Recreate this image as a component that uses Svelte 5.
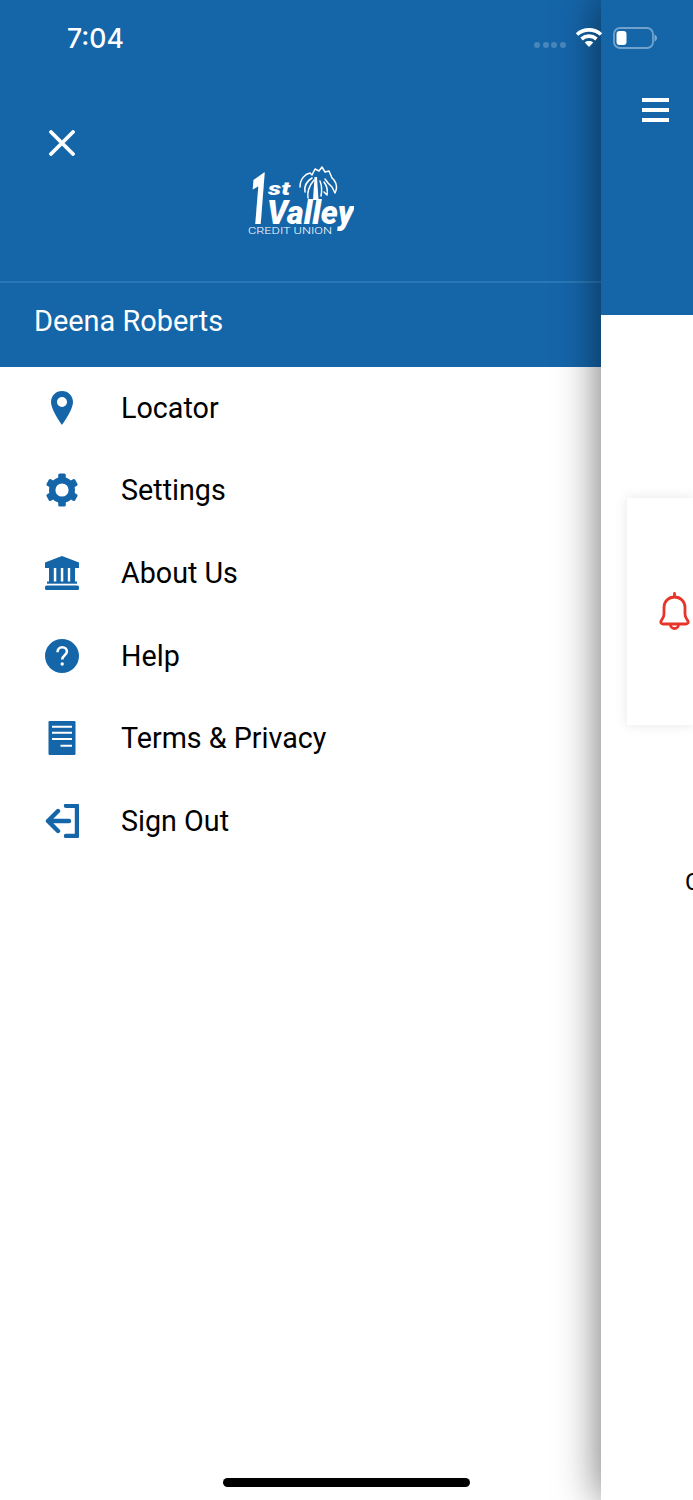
<script>
const menu = ["Locator", "Settings", "About Us", "Help", "Terms & Privacy", "Sign Out"];
const teeth = [0, 60, 120, 180, 240, 300];
</script>

<div class="page">
	<aside class="drawer">
		<header class="drawer-head">
			<div class="brand">
				<svg class="close" viewBox="0 0 26 26" width="26" height="26" aria-label="Close">
					<path d="M2 2L24 24M24 2L2 24" fill="none" stroke="#fff" stroke-width="3.800" stroke-linecap="round"/>
				</svg>
				<svg class="logo" viewBox="0 0 106 68" width="106" height="68" aria-label="1st Valley Credit Union">
					<g fill="none" stroke="#fff" stroke-linecap="round" stroke-linejoin="round">
						<path stroke-width="1.500" d="M52 21C52 13 57 8 62 7L64 9L67 3L71 5L74 1L77 6L81 5L84 12L86 14C89 18 89 23 87 27L84 21L80 17L77 13"/>
						<path stroke-width="1.500" d="M57 26C56 20 59 15 64 12M60 32C59 26 61 20 66 14M76 16C79 20 80 24 79 29L76 26M72 15C74 20 74 25 73 30"/>
					</g>
					<path fill="#fff" d="M66.500 11L69 11L70.500 34L65 34Z"/>
					<text class="l-one" x="1" y="58" textLength="19" lengthAdjust="spacingAndGlyphs">1</text>
					<text class="l-st" x="20" y="29" textLength="22" lengthAdjust="spacingAndGlyphs">st</text>
					<text class="l-valley" x="19" y="58" textLength="87" lengthAdjust="spacingAndGlyphs">Valley</text>
					<text class="l-credit" x="0" y="67.500" textLength="84" lengthAdjust="spacingAndGlyphs">CREDIT UNION</text>
				</svg>
			</div>
			<div class="user">Deena Roberts</div>
		</header>

		<nav class="menu">
			{#each menu as label, i}
				<div class="item">
					<svg viewBox="0 0 34 34" width="34" height="34" class="icon">
						{#if i == 0}
							<path fill-rule="evenodd" d="M17 0C10.900 0 6 4.900 6 11c0 8 11 23 11 23s11-15 11-23C28 4.900 23.100 0 17 0zM17 6a5 5 0 1 1 0 10a5 5 0 0 1 0-10z"/>
						{:else if i == 1}
							<circle cx="17" cy="17" r="9.800" fill="none" stroke="#1565a9" stroke-width="6.400"/>
							{#each teeth as deg}
								<rect x="13.200" y="0.500" width="7.600" height="7" rx="1.600" transform="rotate({deg} 17 17)"/>
							{/each}
						{:else if i == 2}
							<path d="M17 0L34 6.500V12H0V6.500Z"/>
							<path d="M4 12h4.800v14H4zM11.300 12h4.500v14h-4.500zM18.300 12h4.500v14h-4.500zM25.200 12H30v14h-4.800z"/>
							<rect x="2" y="25.500" width="30" height="2.200"/>
							<rect x="0" y="29.600" width="34" height="4.400" rx="1.500"/>
						{:else if i == 3}
							<circle cx="17" cy="17" r="17"/>
							<path d="M12.500 13.200c0-3 2-4.900 4.700-4.900c2.800 0 4.700 1.800 4.700 4.300c0 3.700-4.700 3.800-4.700 8" fill="none" stroke="#fff" stroke-width="2.500"/>
							<circle cx="17.200" cy="25" r="1.700" fill="#fff"/>
						{:else if i == 4}
							<rect x="3.500" y="0" width="27" height="34" rx="1.200"/>
							<path d="M7 5.700h20M7 11.700h20M7 18h20M15.500 24.700H27" stroke="#fff" stroke-width="2.100" fill="none"/>
						{:else}
							<path d="M21 1.800H32V32H21M3 17H24M13 7L3 17L13 27" fill="none" stroke="#1565a9" stroke-width="4.400" stroke-linecap="round" stroke-linejoin="round"/>
						{/if}
					</svg>
					<span>{label}</span>
				</div>
			{/each}
		</nav>
	</aside>

	<main class="content">
		<div class="content-head">
			<div class="burger"><i></i><i></i><i></i></div>
		</div>
		<div class="card">
			<svg viewBox="0 0 32 40" width="32" height="40" fill="none" stroke="#e8352a" stroke-width="2.800" stroke-linecap="round" stroke-linejoin="round">
				<path d="M15.500 1.500V5M15.500 5C9.500 5 5 9.500 5 15.500V22C5 25.500 3.500 26.500 2.300 28.500C1.300 30.500 2 32 4 32H27C29 32 29.700 30.500 28.700 28.500C27.500 26.500 26 25.500 26 22V15.500C26 9.500 21.500 5 15.500 5Z"/>
				<path d="M11.500 32.500a4 4 0 0 0 8 0"/>
			</svg>
		</div>
		<p class="note">Cards</p>
	</main>

	<div class="status">
		<span class="time">7:04</span>
		<div class="signal"><i></i><i></i><i></i><i></i></div>
		<svg class="wifi" viewBox="0 0 28 20" width="28" height="20" fill="none" stroke="#fff" stroke-width="3.600">
			<path d="M2 7.500C9 1.300 19 1.300 26 7.500M6.500 12C11 8.200 17 8.200 21.500 12"/>
			<path d="M14 20L9.800 15.500C12.200 13.600 15.800 13.600 18.200 15.500Z" fill="#fff" stroke="none"/>
		</svg>
		<svg class="battery" viewBox="0 0 44 22" width="44" height="22" fill="none">
			<rect x="1" y="1" width="39" height="20" rx="6" stroke="#fff" stroke-opacity=".4" stroke-width="1.800"/>
			<rect x="3.500" y="4" width="10" height="14" rx="3" fill="#fff"/>
			<path d="M41.500 7.500c1.500.5 2.500 2 2.500 3.500s-1 3-2.500 3.500z" fill="#fff" fill-opacity=".45"/>
		</svg>
	</div>

	<div class="home-bar"></div>
</div>

<style>
	:global(body) {
		margin: 0;
		background: #fff;
	}
	.page {
		position: relative;
		display: flex;
		width: 693px;
		height: 1500px;
		overflow: hidden;
		font-family: Roboto, "Liberation Sans", sans-serif;
		color: #000;
	}
	.drawer {
		flex: 0 0 601px;
		display: flex;
		flex-direction: column;
		background: #fff;
	}
	.drawer-head {
		background: #1565a9;
		color: #fff;
	}
	.brand {
		display: flex;
		flex-direction: column;
		height: 281px;
		padding-top: 130px;
		box-sizing: border-box;
	}
	.close {
		margin-left: 49px;
	}
	.logo {
		align-self: center;
		margin-top: 10px;
	}
	.logo text {
		fill: #fff;
		font-family: Roboto, "Liberation Sans", sans-serif;
	}
	.l-one {
		font-size: 72px;
		font-weight: 900;
		font-style: italic;
	}
	.l-st {
		font-size: 19px;
		font-weight: 900;
		font-style: italic;
	}
	.l-valley {
		font-size: 34px;
		font-weight: 900;
		font-style: italic;
	}
	.l-credit {
		font-size: 8.500px;
		font-weight: 300;
	}
	.user {
		height: 83.500px;
		line-height: 77px;
		border-top: 2px solid #2a78b8;
		padding-left: 34px;
		font-size: 28.900px;
	}
	.menu {
		display: flex;
		flex-direction: column;
	}
	.item {
		display: flex;
		align-items: center;
		height: 82.600px;
		padding-left: 45px;
		gap: 42px;
		font-size: 28.700px;
	}
	.icon {
		flex: none;
		fill: #1565a9;
	}
	.content {
		flex: 1;
		position: relative;
		z-index: 1;
		background: #fff;
		box-shadow: 0 0 44px rgba(0, 0, 0, 0.58);
		min-width: 0;
	}
	.content-head {
		height: 315px;
		background: #1565a9;
		padding: 98px 24px 0 41px;
		box-sizing: border-box;
	}
	.burger {
		display: flex;
		flex-direction: column;
		gap: 6.500px;
		width: 27px;
	}
	.burger i {
		display: block;
		height: 3.500px;
		background: #fff;
	}
	.card {
		display: flex;
		align-items: center;
		height: 227px;
		margin: 183px 0 0 26px;
		padding-left: 32px;
		background: #fff;
		box-shadow: 0 0 12px rgba(0, 0, 0, 0.1);
	}
	.note {
		margin: 143px 0 0 84px;
		font-size: 24px;
		line-height: 28px;
		white-space: nowrap;
	}
	.status {
		position: absolute;
		z-index: 2;
		top: 0;
		left: 0;
		width: 100%;
		height: 76px;
		color: #fff;
	}
	.time {
		position: absolute;
		left: 67px;
		top: 21px;
		font-family: Inter, sans-serif;
		font-size: 26.600px;
		font-weight: 500;
		line-height: 34px;
	}
	.signal {
		position: absolute;
		left: 534px;
		top: 42px;
		display: flex;
		gap: 2.500px;
	}
	.signal i {
		width: 6px;
		height: 6px;
		border-radius: 50%;
		background: rgba(255, 255, 255, 0.22);
	}
	.wifi {
		position: absolute;
		left: 575px;
		top: 27px;
	}
	.battery {
		position: absolute;
		left: 613px;
		top: 27px;
	}
	.home-bar {
		position: absolute;
		z-index: 2;
		left: 223px;
		top: 1478px;
		width: 247px;
		height: 9px;
		border-radius: 5px;
		background: #000;
	}
</style>
